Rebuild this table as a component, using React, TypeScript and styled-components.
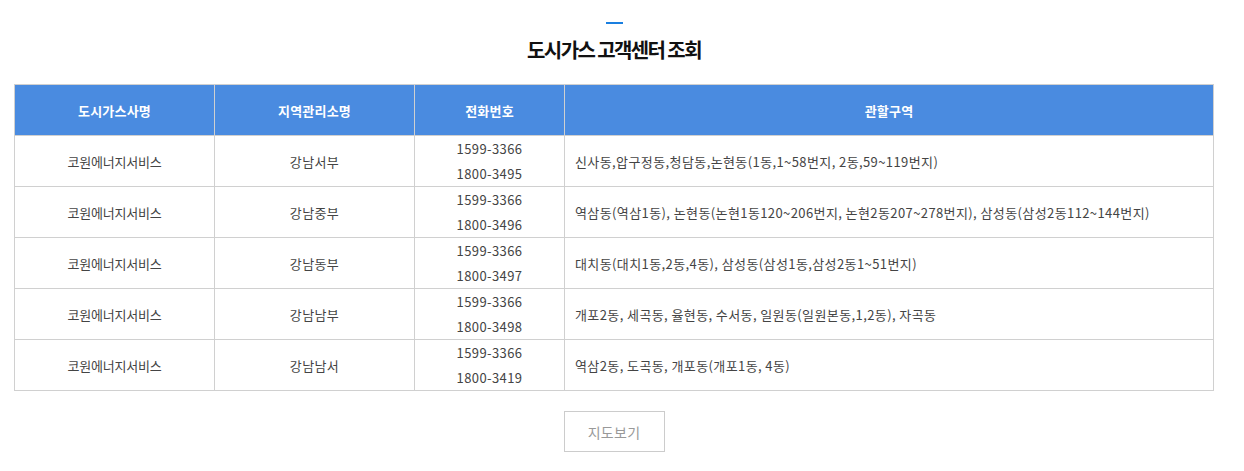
import React from "react";
import styled, { createGlobalStyle } from "styled-components";

const Global = createGlobalStyle`
  body { margin: 0; background: #fff; font-family: "Noto Sans CJK KR", "Noto Sans", sans-serif; }
`;

const Page = styled.div`
  width: 1200px;
  margin-left: 14px;
  display: flex;
  flex-direction: column;
  align-items: center;
`;

const Bar = styled.div`
  width: 17px;
  height: 2px;
  background: #1a7fe0;
  margin-top: 22px;
`;

const Title = styled.h2`
  margin: 11px 0 0;
  font-size: 20px;
  font-weight: 700;
  letter-spacing: -1.6px;
  color: #111;
  line-height: 30px;
`;

const Table = styled.table`
  margin-top: 19px;
  width: 1200px;
  border-collapse: collapse;
  table-layout: fixed;
  font-size: 13px;
  color: #444;
`;

const Th = styled.th`
  background: #4a8be0;
  color: #fff;
  font-weight: 700;
  height: 50px;
  padding: 0;
  border: 1px solid #d0d0d0;
  letter-spacing: 0.2px;
`;

const Td = styled.td<{ $left?: boolean; $tight?: boolean }>`
  border: 1px solid #d0d0d0;
  height: 50px;
  padding: 0 ${(p) => (p.$left ? "10px" : "0")};
  text-align: ${(p) => (p.$left ? "left" : "center")};
  line-height: 25px;
  letter-spacing: ${(p) => (p.$tight ? "-0.2px" : "0.4px")};
  font-weight: 400;
`;

const Phone = styled.div`
  line-height: 25px;
`;

const MapButton = styled.button`
  margin-top: 20px;
  width: 101px;
  height: 41px;
  background: #fff;
  border: 1px solid #ccc;
  color: #999;
  font-family: inherit;
  font-size: 14px;
  letter-spacing: 0.3px;
`;

const rows = [
  ["강남서부", "1800-3495", "신사동,압구정동,청담동,논현동(1동,1~58번지, 2동,59~119번지)"],
  ["강남중부", "1800-3496", "역삼동(역삼1동), 논현동(논현1동120~206번지, 논현2동207~278번지), 삼성동(삼성2동112~144번지)"],
  ["강남동부", "1800-3497", "대치동(대치1동,2동,4동), 삼성동(삼성1동,삼성2동1~51번지)"],
  ["강남남부", "1800-3498", "개포2동, 세곡동, 율현동, 수서동, 일원동(일원본동,1,2동), 자곡동"],
  ["강남남서", "1800-3419", "역삼2동, 도곡동, 개포동(개포1동, 4동)"],
];

export default function App() {
  return (
    <>
      <Global />
      <Page>
        <Bar />
        <Title>도시가스 고객센터 조회</Title>
        <Table>
          <colgroup>
            <col style={{ width: 200 }} />
            <col style={{ width: 200 }} />
            <col style={{ width: 150 }} />
            <col />
          </colgroup>
          <thead>
            <tr>
              <Th>도시가스사명</Th>
              <Th>지역관리소명</Th>
              <Th>전화번호</Th>
              <Th>관할구역</Th>
            </tr>
          </thead>
          <tbody>
            {rows.map((r) => (
              <tr key={r[0]}>
                <Td $tight>코원에너지서비스</Td>
                <Td>{r[0]}</Td>
                <Td>
                  <Phone>1599-3366</Phone>
                  <Phone>{r[1]}</Phone>
                </Td>
                <Td $left>{r[2]}</Td>
              </tr>
            ))}
          </tbody>
        </Table>
        <MapButton>지도보기</MapButton>
      </Page>
    </>
  );
}
